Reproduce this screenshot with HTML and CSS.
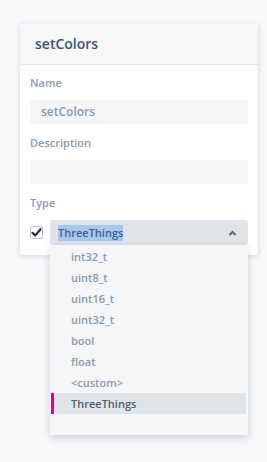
FILE: index.html
```html
<!DOCTYPE html>
<html lang="en">
<head>
  <meta charset="UTF-8">
  <title>setColors</title>
  <link rel="stylesheet" href="styles.css">
</head>
<body>
  <div class="card">
    <div class="card-head">setColors</div>
    <div class="card-body">
      <label class="field-label">Name</label>
      <div class="input">setColors</div>

      <label class="field-label">Description</label>
      <div class="input"></div>

      <label class="field-label">Type</label>
      <div class="type-row">
        <span class="check">
          <svg width="11" height="11" viewBox="0 0 11 11">
            <path d="M1.5 5.8 L4.2 8.5 L9.5 2.2" fill="none" stroke="#1f2f4d" stroke-width="2.2" stroke-linecap="round" stroke-linejoin="round"/>
          </svg>
        </span>
        <div class="select-wrap">
          <div class="select">
            <span class="sel-text">ThreeThings</span>
            <svg class="chev" width="9" height="6" viewBox="0 0 9 6">
              <path d="M1.5 5 L4.5 2 L7.5 5" fill="none" stroke="#55657c" stroke-width="2"/>
            </svg>
          </div>
          <ul class="menu">
            <li>int32_t</li>
            <li>uint8_t</li>
            <li>uint16_t</li>
            <li>uint32_t</li>
            <li>bool</li>
            <li>float</li>
            <li>&lt;custom&gt;</li>
            <li class="active">ThreeThings</li>
            <li class="blank"></li>
          </ul>
        </div>
      </div>
    </div>
  </div>
</body>
</html>
```
FILE: styles.css
```css
/* page */
html {
  height: 100%;
}
body {
  margin: 0;
  min-height: 100%;
  box-sizing: border-box;
  padding: 24px 9px 0 20px;
  background: #f7f8fa;
  font-family: 'Open Sans', 'Noto Sans', sans-serif;
  color: #8b9bb0;
}

/* card */
.card {
  background: #fff;
  box-shadow: 0 1px 5px rgba(40, 60, 90, 0.18);
  height: 231px;
}
.card-head {
  height: 40px;
  line-height: 40px;
  padding-left: 15px;
  background: #f7f8fa;
  border-bottom: 1px solid #dfe5ec;
  font-size: 14px;
  font-weight: 600;
  color: #435471;
}
.card-body {
  padding: 9px 10px 0 10px;
}

.field-label {
  display: block;
  font-size: 11px;
  font-weight: 600;
  line-height: 18px;
  margin-bottom: 8px;
}

.input {
  height: 24px;
  line-height: 24px;
  background: #f3f5f7;
  border-radius: 3px;
  padding-left: 11px;
  font-size: 12px;
  font-weight: 600;
  color: #8b9bb0;
  margin-bottom: 10px;
}

/* type row */
.type-row {
  display: flex;
  align-items: flex-start;
  gap: 7px;
}
.check {
  width: 13px;
  height: 13px;
  margin-top: 6px;
  box-sizing: border-box;
  border: 1px solid #b8c3d0;
  border-radius: 2px;
  background: #fff;
  display: flex;
  align-items: center;
  justify-content: center;
}
.select-wrap {
  flex: 1;
  position: relative;
}
.select {
  height: 25px;
  background: #dfe4e9;
  border-radius: 3px;
  display: flex;
  align-items: center;
  justify-content: space-between;
  padding: 0 11px 0 8px;
}
.sel-text {
  font-size: 11px;
  font-weight: 600;
  color: #3f5f94;
  background: #a9c7ee;
  line-height: 16px;
}

/* dropdown */
.menu {
  position: absolute;
  z-index: 2;
  left: 0;
  right: 0;
  top: 25px;
  margin: 0;
  padding: 1px 0 0 0;
  list-style: none;
  background: #f4f6f8;
  box-shadow: 0 3px 8px rgba(40, 60, 90, 0.2);
}
.menu li {
  height: 21px;
  line-height: 21px;
  padding-left: 21px;
  font-size: 11px;
  font-weight: 600;
  color: #8b9bb0;
  margin-right: 2px;
}
.menu li.active {
  background: #dfe4e9;
  color: #4d5f7a;
  border-left: 3px solid #e5007d;
  margin-left: 1px;
  padding-left: 17px;
}
```
